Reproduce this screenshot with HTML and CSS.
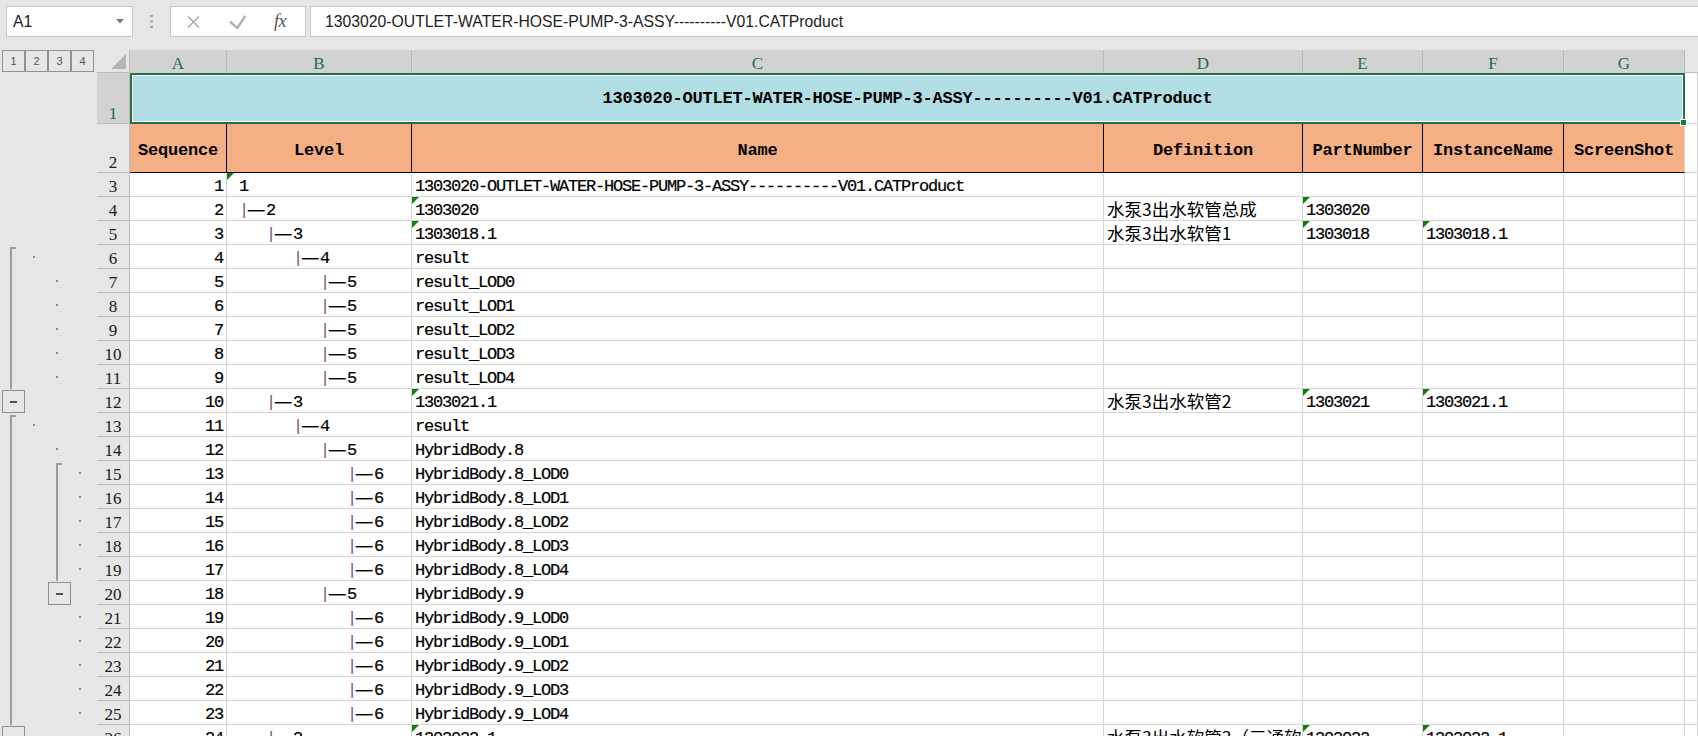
FILE: index.html
```html
<!DOCTYPE html>
<html>
<head>
<meta charset="utf-8">
<title>Sheet</title>
<link rel="stylesheet" href="styles.css">
</head>
<body>
<div class="toolbar">
  <div class="namebox"><span>A1</span><svg class="nb-arrow" width="8" height="5" viewBox="0 0 8 5"><path d="M0 0H8L4 4.5Z"/></svg></div>
  <div class="grip"><svg width="3" height="13" viewBox="0 0 3 13"><rect x="0" y="0" width="3" height="2"/><rect x="0" y="5.5" width="3" height="2"/><rect x="0" y="11" width="3" height="2"/></svg></div>
  <div class="fxbox">
    <svg class="ic-x" width="13" height="12" viewBox="0 0 13 12"><path d="M1 0.5L12 11.5M12 0.5L1 11.5"/></svg>
    <svg class="ic-ok" width="17" height="14" viewBox="0 0 17 14"><path d="M0.8 6.5L8.3 13L16.3 0.8"/></svg>
    <span class="fx">fx</span>
  </div>
  <div class="formula">1303020-OUTLET-WATER-HOSE-PUMP-3-ASSY----------V01.CATProduct</div>
</div>

<div class="sheet">
  <!-- column header row -->
  <div class="ol"><span class="lvbtn l1">1</span><span class="lvbtn l2">2</span><span class="lvbtn l3">3</span><span class="lvbtn l4">4</span></div>
  <div class="corner"><svg width="16" height="16" viewBox="0 0 16 16"><path d="M15 0V15H0Z"/></svg></div>
  <div class="ch">A</div><div class="ch">B</div><div class="ch">C</div><div class="ch">D</div><div class="ch">E</div><div class="ch">F</div><div class="ch">G</div><div class="ch free"></div>

  <!-- row 1 -->
  <div class="ol"></div><div class="rh sel">1</div>
  <div class="title">1303020-OUTLET-WATER-HOSE-PUMP-3-ASSY----------V01.CATProduct<span class="handle"></span></div>
  <div class="c"></div>

  <!-- row 2 -->
  <div class="ol"></div><div class="rh">2</div>
  <div class="hd">Sequence</div><div class="hd">Level</div><div class="hd">Name</div><div class="hd">Definition</div><div class="hd">PartNumber</div><div class="hd">InstanceName</div><div class="hd last">ScreenShot</div>
  <div class="c"></div>

  <!-- row 3 -->
  <div class="ol"></div><div class="rh">3</div>
  <div class="c num">1</div><div class="c t"><span> 1</span></div><div class="c">1303020-OUTLET-WATER-HOSE-PUMP-3-ASSY----------V01.CATProduct</div><div class="c"></div><div class="c"></div><div class="c"></div><div class="c"></div><div class="c"></div>

  <!-- row 4 -->
  <div class="ol"></div><div class="rh">4</div>
  <div class="c num">2</div><div class="c"><span> <i class="bar">|</i><i class="dash">—</i>2</span></div><div class="c t">1303020</div><div class="c cjk">水泵3出水软管总成</div><div class="c t">1303020</div><div class="c"></div><div class="c"></div><div class="c"></div>

  <!-- row 5 -->
  <div class="ol"></div><div class="rh">5</div>
  <div class="c num">3</div><div class="c"><span>    <i class="bar">|</i><i class="dash">—</i>3</span></div><div class="c t">1303018.1</div><div class="c cjk">水泵3出水软管1</div><div class="c t">1303018</div><div class="c t">1303018.1</div><div class="c"></div><div class="c"></div>

  <!-- row 6 -->
  <div class="ol"><i class="vl start l1"></i><i class="dot l2"></i></div><div class="rh">6</div>
  <div class="c num">4</div><div class="c"><span>       <i class="bar">|</i><i class="dash">—</i>4</span></div><div class="c">result</div><div class="c"></div><div class="c"></div><div class="c"></div><div class="c"></div><div class="c"></div>

  <!-- row 7 -->
  <div class="ol"><i class="vl l1"></i><i class="dot l3"></i></div><div class="rh">7</div>
  <div class="c num">5</div><div class="c"><span>          <i class="bar">|</i><i class="dash">—</i>5</span></div><div class="c">result_LOD0</div><div class="c"></div><div class="c"></div><div class="c"></div><div class="c"></div><div class="c"></div>

  <!-- row 8 -->
  <div class="ol"><i class="vl l1"></i><i class="dot l3"></i></div><div class="rh">8</div>
  <div class="c num">6</div><div class="c"><span>          <i class="bar">|</i><i class="dash">—</i>5</span></div><div class="c">result_LOD1</div><div class="c"></div><div class="c"></div><div class="c"></div><div class="c"></div><div class="c"></div>

  <!-- row 9 -->
  <div class="ol"><i class="vl l1"></i><i class="dot l3"></i></div><div class="rh">9</div>
  <div class="c num">7</div><div class="c"><span>          <i class="bar">|</i><i class="dash">—</i>5</span></div><div class="c">result_LOD2</div><div class="c"></div><div class="c"></div><div class="c"></div><div class="c"></div><div class="c"></div>

  <!-- row 10 -->
  <div class="ol"><i class="vl l1"></i><i class="dot l3"></i></div><div class="rh">10</div>
  <div class="c num">8</div><div class="c"><span>          <i class="bar">|</i><i class="dash">—</i>5</span></div><div class="c">result_LOD3</div><div class="c"></div><div class="c"></div><div class="c"></div><div class="c"></div><div class="c"></div>

  <!-- row 11 -->
  <div class="ol"><i class="vl l1"></i><i class="dot l3"></i></div><div class="rh">11</div>
  <div class="c num">9</div><div class="c"><span>          <i class="bar">|</i><i class="dash">—</i>5</span></div><div class="c">result_LOD4</div><div class="c"></div><div class="c"></div><div class="c"></div><div class="c"></div><div class="c"></div>

  <!-- row 12 -->
  <div class="ol"><i class="obtn l1"></i></div><div class="rh">12</div>
  <div class="c num">10</div><div class="c"><span>    <i class="bar">|</i><i class="dash">—</i>3</span></div><div class="c t">1303021.1</div><div class="c cjk">水泵3出水软管2</div><div class="c t">1303021</div><div class="c t">1303021.1</div><div class="c"></div><div class="c"></div>

  <!-- row 13 -->
  <div class="ol"><i class="vl start l1"></i><i class="dot l2"></i></div><div class="rh">13</div>
  <div class="c num">11</div><div class="c"><span>       <i class="bar">|</i><i class="dash">—</i>4</span></div><div class="c">result</div><div class="c"></div><div class="c"></div><div class="c"></div><div class="c"></div><div class="c"></div>

  <!-- row 14 -->
  <div class="ol"><i class="vl l1"></i><i class="dot l3"></i></div><div class="rh">14</div>
  <div class="c num">12</div><div class="c"><span>          <i class="bar">|</i><i class="dash">—</i>5</span></div><div class="c">HybridBody.8</div><div class="c"></div><div class="c"></div><div class="c"></div><div class="c"></div><div class="c"></div>

  <!-- row 15 -->
  <div class="ol"><i class="vl l1"></i><i class="vl start l3"></i><i class="dot l4"></i></div><div class="rh">15</div>
  <div class="c num">13</div><div class="c"><span>             <i class="bar">|</i><i class="dash">—</i>6</span></div><div class="c">HybridBody.8_LOD0</div><div class="c"></div><div class="c"></div><div class="c"></div><div class="c"></div><div class="c"></div>

  <!-- row 16 -->
  <div class="ol"><i class="vl l1"></i><i class="vl l3"></i><i class="dot l4"></i></div><div class="rh">16</div>
  <div class="c num">14</div><div class="c"><span>             <i class="bar">|</i><i class="dash">—</i>6</span></div><div class="c">HybridBody.8_LOD1</div><div class="c"></div><div class="c"></div><div class="c"></div><div class="c"></div><div class="c"></div>

  <!-- row 17 -->
  <div class="ol"><i class="vl l1"></i><i class="vl l3"></i><i class="dot l4"></i></div><div class="rh">17</div>
  <div class="c num">15</div><div class="c"><span>             <i class="bar">|</i><i class="dash">—</i>6</span></div><div class="c">HybridBody.8_LOD2</div><div class="c"></div><div class="c"></div><div class="c"></div><div class="c"></div><div class="c"></div>

  <!-- row 18 -->
  <div class="ol"><i class="vl l1"></i><i class="vl l3"></i><i class="dot l4"></i></div><div class="rh">18</div>
  <div class="c num">16</div><div class="c"><span>             <i class="bar">|</i><i class="dash">—</i>6</span></div><div class="c">HybridBody.8_LOD3</div><div class="c"></div><div class="c"></div><div class="c"></div><div class="c"></div><div class="c"></div>

  <!-- row 19 -->
  <div class="ol"><i class="vl l1"></i><i class="vl l3"></i><i class="dot l4"></i></div><div class="rh">19</div>
  <div class="c num">17</div><div class="c"><span>             <i class="bar">|</i><i class="dash">—</i>6</span></div><div class="c">HybridBody.8_LOD4</div><div class="c"></div><div class="c"></div><div class="c"></div><div class="c"></div><div class="c"></div>

  <!-- row 20 -->
  <div class="ol"><i class="vl l1"></i><i class="obtn l3"></i></div><div class="rh">20</div>
  <div class="c num">18</div><div class="c"><span>          <i class="bar">|</i><i class="dash">—</i>5</span></div><div class="c">HybridBody.9</div><div class="c"></div><div class="c"></div><div class="c"></div><div class="c"></div><div class="c"></div>

  <!-- row 21 -->
  <div class="ol"><i class="vl l1"></i><i class="dot l4"></i></div><div class="rh">21</div>
  <div class="c num">19</div><div class="c"><span>             <i class="bar">|</i><i class="dash">—</i>6</span></div><div class="c">HybridBody.9_LOD0</div><div class="c"></div><div class="c"></div><div class="c"></div><div class="c"></div><div class="c"></div>

  <!-- row 22 -->
  <div class="ol"><i class="vl l1"></i><i class="dot l4"></i></div><div class="rh">22</div>
  <div class="c num">20</div><div class="c"><span>             <i class="bar">|</i><i class="dash">—</i>6</span></div><div class="c">HybridBody.9_LOD1</div><div class="c"></div><div class="c"></div><div class="c"></div><div class="c"></div><div class="c"></div>

  <!-- row 23 -->
  <div class="ol"><i class="vl l1"></i><i class="dot l4"></i></div><div class="rh">23</div>
  <div class="c num">21</div><div class="c"><span>             <i class="bar">|</i><i class="dash">—</i>6</span></div><div class="c">HybridBody.9_LOD2</div><div class="c"></div><div class="c"></div><div class="c"></div><div class="c"></div><div class="c"></div>

  <!-- row 24 -->
  <div class="ol"><i class="vl l1"></i><i class="dot l4"></i></div><div class="rh">24</div>
  <div class="c num">22</div><div class="c"><span>             <i class="bar">|</i><i class="dash">—</i>6</span></div><div class="c">HybridBody.9_LOD3</div><div class="c"></div><div class="c"></div><div class="c"></div><div class="c"></div><div class="c"></div>

  <!-- row 25 -->
  <div class="ol"><i class="vl l1"></i><i class="dot l4"></i></div><div class="rh">25</div>
  <div class="c num">23</div><div class="c"><span>             <i class="bar">|</i><i class="dash">—</i>6</span></div><div class="c">HybridBody.9_LOD4</div><div class="c"></div><div class="c"></div><div class="c"></div><div class="c"></div><div class="c"></div>

  <!-- row 26 -->
  <div class="ol"><i class="obtn l1"></i></div><div class="rh">26</div>
  <div class="c num">24</div><div class="c"><span>    <i class="bar">|</i><i class="dash">—</i>3</span></div><div class="c t">1303022.1</div><div class="c cjk">水泵3出水软管3（三通软管）</div><div class="c t">1303022</div><div class="c t">1303022.1</div><div class="c"></div><div class="c"></div>
</div>
</body>
</html>
```

FILE: styles.css
```css
* { box-sizing: border-box; margin: 0; padding: 0; }
html, body { width: 1698px; height: 736px; overflow: hidden; }
body {
  background: #e6e6e6;
  font-family: "Liberation Sans", Arial, sans-serif;
  color: #000;
}

/* ---------- formula bar ---------- */
.toolbar {
  height: 50px;
  display: flex;
  align-items: flex-start;
  padding: 6px 0 0 6px;
}
.namebox {
  width: 127px;
  height: 31px;
  background: #fff;
  border: 1px solid #c6c6c6;
  display: flex;
  align-items: center;
  justify-content: space-between;
  padding: 0 8px 0 6px;
  font-size: 15.75px;
  color: #222;
}
.nb-arrow { fill: #7a7a7a; }
.grip {
  width: 37px;
  height: 31px;
  display: flex;
  align-items: center;
  justify-content: center;
}
.grip svg { fill: #a3a3a3; }
.fxbox {
  width: 136px;
  height: 31px;
  background: #fff;
  border: 1px solid #c6c6c6;
  display: flex;
  align-items: center;
}
.ic-x { margin-left: 16px; fill: none; stroke: #a8a8a8; stroke-width: 1.4; }
.ic-ok { margin-left: 29px; fill: none; stroke: #b3b3b3; stroke-width: 2.4; }
.fx {
  margin-left: 28px;
  font-family: "Liberation Serif", serif;
  font-style: italic;
  font-size: 18px;
  color: #555;
  letter-spacing: -0.5px;
}
.formula {
  flex: 1;
  height: 31px;
  margin-left: 4px;
  background: #fff;
  border: 1px solid #c6c6c6;
  border-right: none;
  display: flex;
  align-items: center;
  padding-left: 14px;
  font-size: 15.75px;
  color: #222;
  white-space: nowrap;
}

/* ---------- sheet grid ---------- */
.sheet {
  display: grid;
  grid-template-columns: 97px 33px 97px 185px 692px 199px 120px 141px 121px 13px;
  grid-template-rows: 23px 51px 49px repeat(24, 24px);
}

/* outline gutter */
.ol {
  display: grid;
  grid-template-columns: 2px repeat(4, 23px) 3px;
  grid-template-rows: 1fr;
}
.l1 { grid-column: 2; grid-row: 1; }
.l2 { grid-column: 3; grid-row: 1; }
.l3 { grid-column: 4; grid-row: 1; }
.l4 { grid-column: 5; grid-row: 1; }
.lvbtn {
  width: 23px;
  height: 22px;
  border: 1px solid #929292;
  display: flex;
  align-items: center;
  justify-content: center;
  font-size: 11px;
  color: #555;
}
.dot {
  justify-self: start;
  align-self: center;
  width: 2px;
  height: 2px;
  margin-left: 8px;
  background: #8c8c8c;
}
.vl {
  justify-self: start;
  align-self: stretch;
  width: 2px;
  margin-left: 8px;
  background: #9d9d9d;
}
.vl.start {
  width: 6px;
  margin-top: 2px;
  background: none;
  border-left: 2px solid #9d9d9d;
  border-top: 2px solid #9d9d9d;
}
.obtn {
  justify-self: start;
  align-self: start;
  width: 23px;
  height: 23px;
  margin-top: 1px;
  border: 1px solid #8f8f8f;
  display: flex;
  align-items: center;
  justify-content: center;
}
.obtn::before {
  content: "";
  width: 7px;
  height: 2px;
  background: #505050;
}

/* headers */
.corner {
  border-right: 1px solid #bdbdbd;
  border-bottom: 1px solid #bdbdbd;
  display: flex;
  align-items: flex-end;
  justify-content: flex-end;
  padding: 0 2px 2px 0;
}
.corner svg { fill: #b5b5b5; }
.ch {
  background: #d2d2d2;
  border-right: 1px solid #b9b9b9;
  display: flex;
  align-items: flex-end;
  justify-content: center;
  font-family: "Liberation Serif", serif;
  font-size: 17px;
  line-height: 19px;
  color: #1f6e46;
}
.ch.free {
  background: #e6e6e6;
  border-right: none;
  border-bottom: 1px solid #bdbdbd;
}
.rh {
  border-right: 1px solid #bdbdbd;
  border-bottom: 1px solid #bdbdbd;
  display: flex;
  align-items: flex-end;
  justify-content: center;
  font-family: "Liberation Serif", serif;
  font-size: 17px;
  line-height: 19px;
  color: #1a1a1a;
}
.rh.sel { background: #d2d2d2; color: #1f6e46; }

/* cells */
.c {
  background: #fff;
  border-right: 1px solid #d4d4d4;
  border-bottom: 1px solid #d4d4d4;
  display: flex;
  align-items: flex-end;
  padding: 0 3px;
  font-family: "Liberation Mono", monospace;
  font-size: 17px;
  letter-spacing: -1.2px;
  line-height: 18px;
  white-space: pre;
  overflow: hidden;
  position: relative;
  color: #000;
  -webkit-text-stroke: 0.2px #000;
}
.c.num { justify-content: flex-end; padding-right: 3px; }
.c.cjk {
  font-family: "Noto Sans CJK SC", sans-serif;
  font-size: 17.5px;
  letter-spacing: 0;
  padding-bottom: 2px;
  -webkit-text-stroke: 0;
}
.c.t::before {
  content: "";
  position: absolute;
  left: 0;
  top: 0;
  border-top: 7px solid #127c12;
  border-right: 7px solid transparent;
}
.bar { font-style: normal; color: #7b5a8c; -webkit-text-stroke: 0; }
.dash {
  font-style: normal;
  display: inline-block;
  width: 9px;
  margin-right: 9px;
  transform: scaleX(1.6);
  transform-origin: 0 50%;
}

/* header row 2 */
.hd {
  background: #f4b084;
  border-right: 1px solid #000;
  border-bottom: 1px solid #000;
  display: flex;
  align-items: center;
  justify-content: center;
  padding-top: 4px;
  font-family: "Liberation Mono", monospace;
  font-weight: bold;
  font-size: 17px;
  letter-spacing: -0.2px;
  white-space: nowrap;
  overflow: hidden;
}
.hd.last { border-right-color: #d4d4d4; }

/* title (merged A1:G1, selected) */
.title {
  grid-column: span 7;
  background: #b0dee4;
  border: 2px solid #217346;
  box-shadow: inset 0 0 0 1px #fff;
  display: flex;
  align-items: center;
  justify-content: center;
  font-family: "Liberation Mono", monospace;
  font-weight: bold;
  font-size: 17px;
  letter-spacing: -0.2px;
  white-space: nowrap;
  position: relative;
}
.handle {
  position: absolute;
  right: -4px;
  bottom: -4px;
  width: 7px;
  height: 7px;
  background: #217346;
  border: 1px solid #fff;
  z-index: 2;
}
```
